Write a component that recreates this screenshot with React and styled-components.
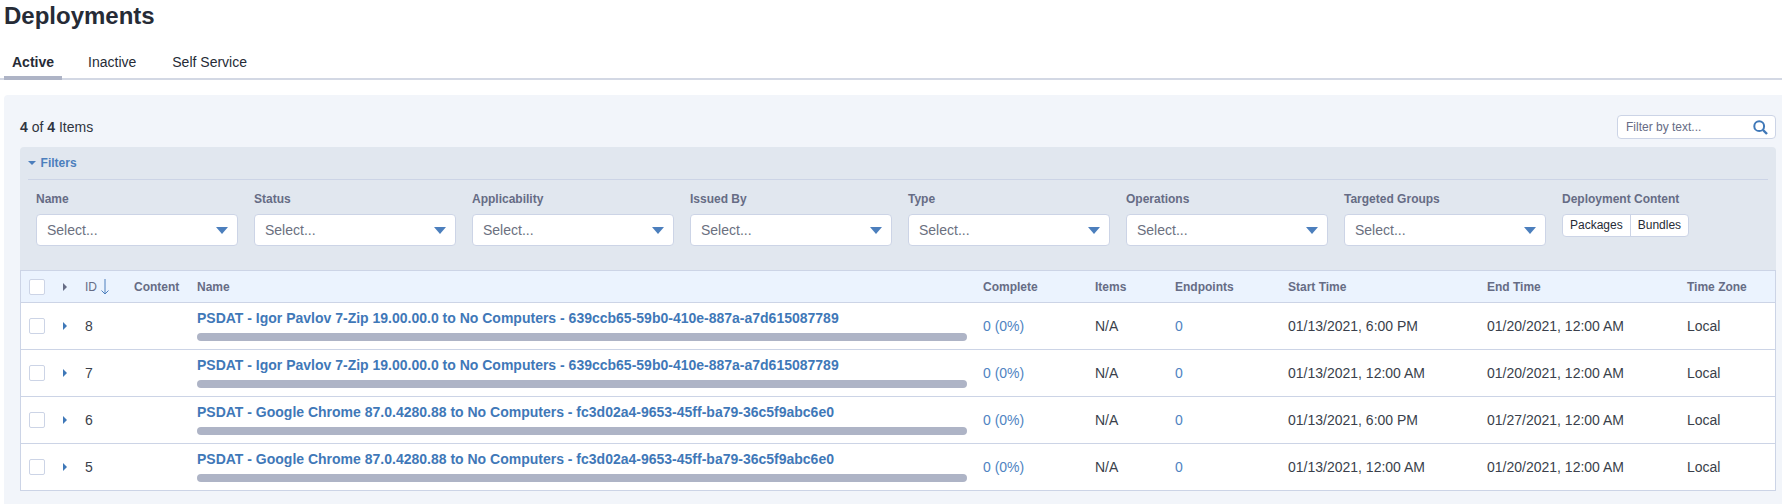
import React from "react";
import styled, { createGlobalStyle } from "styled-components";

const GlobalStyle = createGlobalStyle`
  html, body {
    margin: 0;
    padding: 0;
    background: #fff;
    font-family: "Liberation Sans", Arial, sans-serif;
    color: #2f3440;
  }
`;

const Page = styled.div`
  width: 1782px;
  height: 504px;
  overflow: hidden;
`;

const Title = styled.h1`
  margin: 0;
  padding: 2px 0 0 4px;
  height: 34px;
  font-size: 24px;
  line-height: 28px;
  font-weight: 700;
  color: #262b36;
`;

const Tabs = styled.div`
  display: flex;
  height: 44px;
  box-sizing: border-box;
  padding-left: 4px;
  border-bottom: 2px solid #d3d8e4;
`;

const Tab = styled.div`
  box-sizing: border-box;
  height: 44px;
  padding: 18px 8px 0;
  margin-right: ${(p) => p.$gap}px;
  font-size: 14px;
  line-height: 16px;
  font-weight: ${(p) => (p.$active ? 700 : 400)};
  color: #262b36;
  border-bottom: 4px solid ${(p) => (p.$active ? "#aeb4c6" : "transparent")};
`;

const Panel = styled.div`
  margin: 15px 0 0 4px;
  padding: 0 6px 13px 16px;
  background: #f2f5fa;
  border-radius: 4px 0 0 0;
`;

const Toolbar = styled.div`
  display: flex;
  align-items: center;
  justify-content: space-between;
  height: 52px;
  padding-top: 12px;
  box-sizing: border-box;
  font-size: 14px;
`;

const FilterBox = styled.div`
  display: flex;
  align-items: center;
  justify-content: space-between;
  box-sizing: border-box;
  width: 159px;
  height: 24px;
  padding: 0 7px 0 8px;
  background: #fff;
  border: 1px solid #ccd4e6;
  border-radius: 4px;
  font-size: 12px;
  color: #666c85;
`;

const FiltersPanel = styled.div`
  height: 123px;
  box-sizing: border-box;
  padding: 0 8px;
  background: #e1e7ef;
  border-radius: 4px 4px 0 0;
`;

const FiltersHead = styled.div`
  display: flex;
  align-items: center;
  gap: 4.6px;
  height: 33px;
  box-sizing: border-box;
  border-bottom: 1px solid #ccd4e6;
  font-size: 12px;
  font-weight: 700;
  color: #4c7fbd;
`;

const Caret = styled.span`
  width: 0;
  height: 0;
  border-left: ${(p) => p.$w / 2}px solid transparent;
  border-right: ${(p) => p.$w / 2}px solid transparent;
  border-top: ${(p) => p.$h}px solid #4c7fbd;
`;

const FilterGrid = styled.div`
  display: grid;
  grid-template-columns: repeat(8, 202px);
  column-gap: 16px;
  padding: 12px 0 0 8px;
`;

const FilterLabel = styled.div`
  height: 22px;
  font-size: 12px;
  line-height: 14px;
  font-weight: 700;
  color: #666c85;
`;

const Select = styled.div`
  display: flex;
  align-items: center;
  justify-content: space-between;
  box-sizing: border-box;
  height: 32px;
  padding: 0 9px 0 10px;
  background: #fff;
  border: 1px solid #ccd4e6;
  border-radius: 4px;
  font-size: 14px;
  color: #6b7080;
`;

const Toggle = styled.div`
  display: inline-flex;
  box-sizing: border-box;
  height: 23px;
  background: #fff;
  border: 1px solid #ccd4e6;
  border-radius: 4px;
  font-size: 12px;
  color: #262b36;
`;

const ToggleItem = styled.div`
  padding: 0 7px;
  line-height: 20px;
  & + & {
    border-left: 1px solid #ccd4e6;
  }
`;

const Table = styled.div`
  border: 1px solid #ccd4e6;
  border-bottom: 0;
`;

const Row = styled.div`
  display: grid;
  grid-template-columns: 34px 22px 49px 63px 786px 112px 80px 113px 199px 200px 1fr;
  align-items: center;
  box-sizing: border-box;
  height: ${(p) => (p.$head ? 32 : 47)}px;
  padding-left: 8px;
  background: ${(p) => (p.$head ? "#ebf3fe" : "#fff")};
  border-bottom: 1px solid #ccd4e6;
  font-size: ${(p) => (p.$head ? 12 : 14)}px;
  font-weight: ${(p) => (p.$head ? 700 : 400)};
  color: ${(p) => (p.$head ? "#666c85" : "#3a3f4b")};
`;

const Checkbox = styled.div`
  box-sizing: border-box;
  width: 16px;
  height: 16px;
  background: #fff;
  border: 1px solid #ccd4e6;
  border-radius: 2px;
`;

const Expander = styled.span`
  display: block;
  width: 0;
  height: 0;
  border-top: 4px solid transparent;
  border-bottom: 4px solid transparent;
  border-left: 4px solid ${(p) => (p.$head ? "#666c85" : "#3f78b8")};
`;

const IdHead = styled.div`
  display: flex;
  align-items: center;
  gap: 4px;
  font-weight: 400;
`;

const NameCell = styled.div`
  align-self: start;
  padding-top: 7px;
`;

const DeployName = styled.div`
  font-size: 14px;
  line-height: 16px;
  font-weight: 700;
  color: #3f78b8;
`;

const Progress = styled.div`
  width: 770px;
  height: 8px;
  margin-top: 7px;
  background: #aeb4c6;
  border-radius: 4px;
`;

const Link = styled.span`
  color: #4f84c2;
`;

const filters = ["Name", "Status", "Applicability", "Issued By", "Type", "Operations", "Targeted Groups"];

const rows = [
  { id: 8, name: "PSDAT - Igor Pavlov 7-Zip 19.00.00.0 to No Computers - 639ccb65-59b0-410e-887a-a7d615087789", start: "01/13/2021, 6:00 PM", end: "01/20/2021, 12:00 AM" },
  { id: 7, name: "PSDAT - Igor Pavlov 7-Zip 19.00.00.0 to No Computers - 639ccb65-59b0-410e-887a-a7d615087789", start: "01/13/2021, 12:00 AM", end: "01/20/2021, 12:00 AM" },
  { id: 6, name: "PSDAT - Google Chrome 87.0.4280.88 to No Computers - fc3d02a4-9653-45ff-ba79-36c5f9abc6e0", start: "01/13/2021, 6:00 PM", end: "01/27/2021, 12:00 AM" },
  { id: 5, name: "PSDAT - Google Chrome 87.0.4280.88 to No Computers - fc3d02a4-9653-45ff-ba79-36c5f9abc6e0", start: "01/13/2021, 12:00 AM", end: "01/20/2021, 12:00 AM" },
];

function SearchIcon() {
  return (
    <svg width="15" height="15" viewBox="0 0 15 15" fill="none" stroke="#3f78b8">
      <circle cx="6.2" cy="6.2" r="4.9" strokeWidth="2" />
      <path d="M10 10l4 4" strokeWidth="2.4" />
    </svg>
  );
}

function SortArrow() {
  return (
    <svg width="8" height="16" viewBox="0 0 8 16" fill="none" stroke="#4c7fbd" strokeWidth="1">
      <path d="M4 0v15M.5 11.5L4 15l3.5-3.5" />
    </svg>
  );
}

export default function App() {
  return (
    <Page>
      <GlobalStyle />
      <Title>Deployments</Title>
      <Tabs>
        <Tab $active $gap={18}>Active</Tab>
        <Tab $gap={20}>Inactive</Tab>
        <Tab $gap={0}>Self Service</Tab>
      </Tabs>
      <Panel>
        <Toolbar>
          <div>
            <b>4</b> of <b>4</b> Items
          </div>
          <FilterBox>
            Filter by text...
            <SearchIcon />
          </FilterBox>
        </Toolbar>
        <FiltersPanel>
          <FiltersHead>
            <Caret $w={8} $h={4} />
            Filters
          </FiltersHead>
          <FilterGrid>
            {filters.map((f) => (
              <div key={f}>
                <FilterLabel>{f}</FilterLabel>
                <Select>
                  Select...
                  <Caret $w={13} $h={7} />
                </Select>
              </div>
            ))}
            <div>
              <FilterLabel>Deployment Content</FilterLabel>
              <Toggle>
                <ToggleItem>Packages</ToggleItem>
                <ToggleItem>Bundles</ToggleItem>
              </Toggle>
            </div>
          </FilterGrid>
        </FiltersPanel>
        <Table>
          <Row $head>
            <Checkbox />
            <Expander $head />
            <IdHead>
              ID <SortArrow />
            </IdHead>
            <div>Content</div>
            <div>Name</div>
            <div>Complete</div>
            <div>Items</div>
            <div>Endpoints</div>
            <div>Start Time</div>
            <div>End Time</div>
            <div>Time Zone</div>
          </Row>
          {rows.map((r) => (
            <Row key={r.id}>
              <Checkbox />
              <Expander />
              <div>{r.id}</div>
              <div />
              <NameCell>
                <DeployName>{r.name}</DeployName>
                <Progress />
              </NameCell>
              <Link>0 (0%)</Link>
              <div>N/A</div>
              <Link>0</Link>
              <div>{r.start}</div>
              <div>{r.end}</div>
              <div>Local</div>
            </Row>
          ))}
        </Table>
      </Panel>
    </Page>
  );
}
